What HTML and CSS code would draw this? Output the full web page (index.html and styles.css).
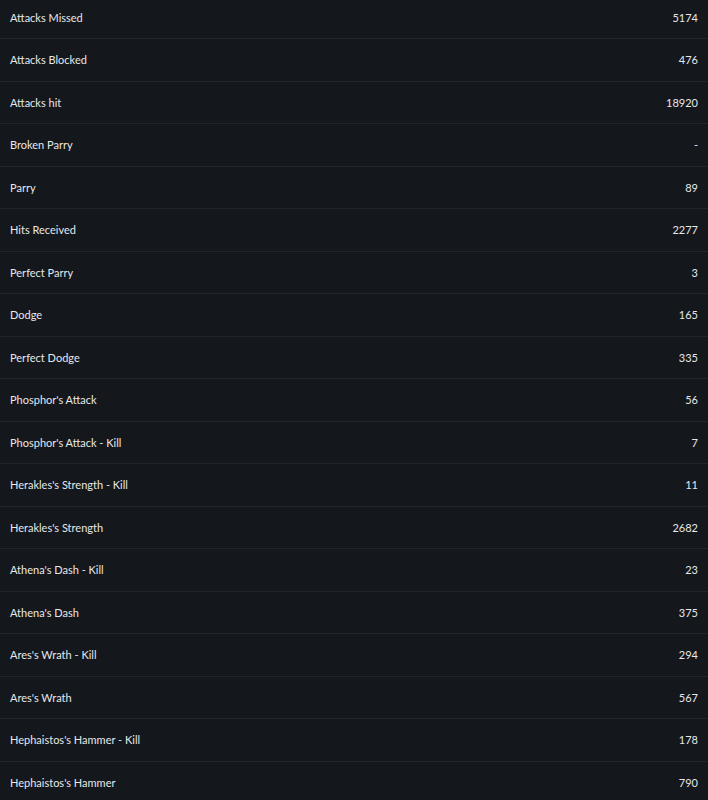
FILE: index.html
```html
<!DOCTYPE html>
<html>
<head>
<meta charset="utf-8">
<link rel="stylesheet" href="styles.css">
</head>
<body>
<div class="stats">
  <div class="row"><span class="label">Attacks Missed</span><span class="value">5174</span></div>
  <div class="row"><span class="label">Attacks Blocked</span><span class="value">476</span></div>
  <div class="row"><span class="label">Attacks hit</span><span class="value">18920</span></div>
  <div class="row"><span class="label">Broken Parry</span><span class="value">-</span></div>
  <div class="row"><span class="label">Parry</span><span class="value">89</span></div>
  <div class="row"><span class="label">Hits Received</span><span class="value">2277</span></div>
  <div class="row"><span class="label">Perfect Parry</span><span class="value">3</span></div>
  <div class="row"><span class="label">Dodge</span><span class="value">165</span></div>
  <div class="row"><span class="label">Perfect Dodge</span><span class="value">335</span></div>
  <div class="row"><span class="label">Phosphor's Attack</span><span class="value">56</span></div>
  <div class="row"><span class="label">Phosphor's Attack - Kill</span><span class="value">7</span></div>
  <div class="row"><span class="label">Herakles's Strength - Kill</span><span class="value">11</span></div>
  <div class="row"><span class="label">Herakles's Strength</span><span class="value">2682</span></div>
  <div class="row"><span class="label">Athena's Dash - Kill</span><span class="value">23</span></div>
  <div class="row"><span class="label">Athena's Dash</span><span class="value">375</span></div>
  <div class="row"><span class="label">Ares's Wrath - Kill</span><span class="value">294</span></div>
  <div class="row"><span class="label">Ares's Wrath</span><span class="value">567</span></div>
  <div class="row"><span class="label">Hephaistos's Hammer - Kill</span><span class="value">178</span></div>
  <div class="row"><span class="label">Hephaistos's Hammer</span><span class="value">790</span></div>
</div>
</body>
</html>
```
FILE: styles.css
```css
html, body {
  margin: 0;
  padding: 0;
  background: #14171c;
}
body {
  font-family: Lato, "Noto Sans", sans-serif;
  font-size: 11px;
  color: #e6e8ea;
  overflow: hidden;
}
.stats {
  display: flex;
  flex-direction: column;
  margin-top: -3.5px;
}
.row {
  display: flex;
  justify-content: space-between;
  align-items: center;
  height: 41.5px;
  padding: 0 10px;
  border-bottom: 1px solid #1f252b;
}
```
